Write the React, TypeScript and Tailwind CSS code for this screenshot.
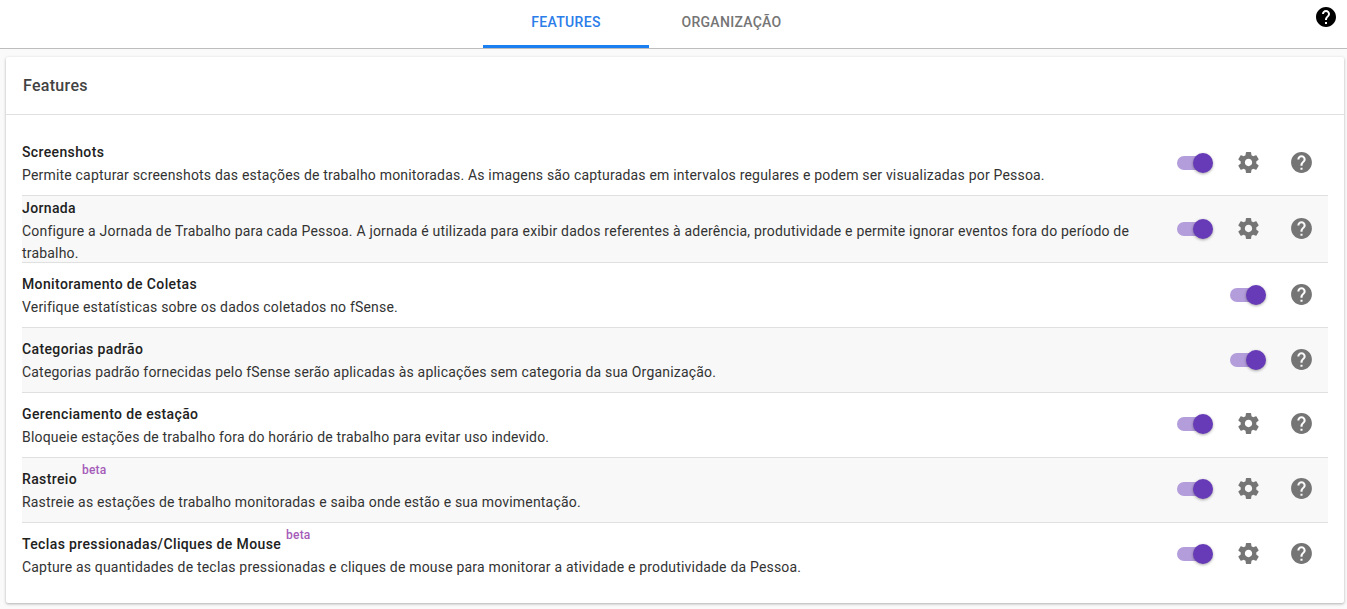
const gear = "M19.43 12.98c.04-.32.07-.64.07-.98s-.03-.66-.07-.98l2.11-1.65c.19-.15.24-.42.12-.64l-2-3.46c-.12-.22-.39-.3-.61-.22l-2.49 1c-.52-.4-1.08-.73-1.69-.98l-.38-2.65C14.46 2.18 14.25 2 14 2h-4c-.25 0-.46.18-.49.42l-.38 2.65c-.61.25-1.17.59-1.69.98l-2.49-1c-.23-.09-.49 0-.61.22l-2 3.46c-.13.22-.07.49.12.64l2.11 1.65c-.04.32-.07.65-.07.98s.03.66.07.98l-2.11 1.65c-.19.15-.24.42-.12.64l2 3.46c.12.22.39.3.61.22l2.49-1c.52.4 1.08.73 1.69.98l.38 2.65c.03.24.24.42.49.42h4c.25 0 .46-.18.49-.42l.38-2.65c.61-.25 1.17-.59 1.69-.98l2.49 1c.23.09.49 0 .61-.22l2-3.46c.12-.22.07-.49-.12-.64l-2.11-1.65zM12 15.5c-1.93 0-3.5-1.57-3.5-3.5s1.57-3.5 3.5-3.5 3.5 1.57 3.5 3.5-1.57 3.5-3.5 3.5z";
const help = "M12 2C6.48 2 2 6.48 2 12s4.48 10 10 10 10-4.48 10-10S17.52 2 12 2zm1 17h-2v-2h2v2zm2.07-7.75l-.9.92C13.45 12.9 13 13.5 13 15h-2v-.5c0-1.1.45-2.1 1.17-2.83l1.24-1.26c.37-.36.59-.86.59-1.41 0-1.1-.9-2-2-2s-2 .9-2 2H8c0-2.21 1.79-4 4-4s4 1.79 4 4c0 .88-.36 1.68-.93 2.25z";

function Icon({ d, className }: { d: string; className: string }) {
  return (
    <svg viewBox="0 0 24 24" className={className} fill="currentColor">
      <path d={d} />
    </svg>
  );
}

function Toggle({ className }: { className: string }) {
  return (
    <div className={`relative w-[36px] h-[20px] shrink-0 ${className}`}>
      <div className="absolute left-0 top-[3px] w-[34px] h-[14px] rounded-full bg-[#b39ddb]" />
      <div className="absolute right-0 top-0 w-[20px] h-[20px] rounded-full bg-[#673ab7] shadow-[0_1px_3px_rgba(0,0,0,0.35)]" />
    </div>
  );
}

type Row = { title: string; desc: string; gear: boolean; beta?: boolean; tall?: boolean };

const rows: Row[] = [
  { title: "Screenshots", desc: "Permite capturar screenshots das estações de trabalho monitoradas. As imagens são capturadas em intervalos regulares e podem ser visualizadas por Pessoa.", gear: true },
  { title: "Jornada", desc: "Configure a Jornada de Trabalho para cada Pessoa. A jornada é utilizada para exibir dados referentes à aderência, produtividade e permite ignorar eventos fora do período de trabalho.", gear: true, tall: true },
  { title: "Monitoramento de Coletas", desc: "Verifique estatísticas sobre os dados coletados no fSense.", gear: false },
  { title: "Categorias padrão", desc: "Categorias padrão fornecidas pelo fSense serão aplicadas às aplicações sem categoria da sua Organização.", gear: false },
  { title: "Gerenciamento de estação", desc: "Bloqueie estações de trabalho fora do horário de trabalho para evitar uso indevido.", gear: true },
  { title: "Rastreio", desc: "Rastreie as estações de trabalho monitoradas e saiba onde estão e sua movimentação.", gear: true, beta: true },
  { title: "Teclas pressionadas/Cliques de Mouse", desc: "Capture as quantidades de teclas pressionadas e cliques de mouse para monitorar a atividade e produtividade da Pessoa.", gear: true, beta: true },
];

export default function App() {
  return (
    <div className="min-h-screen bg-[#fafafa] font-['Roboto',sans-serif]">
      <header className="flex h-[49px] bg-white border-b border-[#bdbdbd]">
        <nav className="flex flex-1 justify-center">
          <div className="w-[166px] h-[48px] flex items-center justify-center border-b-[3px] border-[#1a7ff0] text-[#2b7de9] text-sm font-medium tracking-[0.35px] pb-[1px]">
            FEATURES
          </div>
          <div className="w-[166px] h-[48px] flex items-center justify-center text-[#757575] text-sm font-medium tracking-[0.28px] pb-[4px] pr-[1px]">
            ORGANIZAÇÃO
          </div>
        </nav>
        <div className="w-[49px] flex justify-start pt-[5px] pl-[16px]">
          <Icon d={help} className="w-[24px] h-[24px] text-black" />
        </div>
      </header>
      <section className="mx-[6px] mt-[8px] mr-[3px] bg-white rounded-[2px] shadow-[0_1px_3px_rgba(0,0,0,0.3)]">
        <h2 className="h-[58px] flex items-center px-[17px] border-b border-[#e0e0e0] text-base font-medium tracking-[0.3px] text-[#424242]">
          Features
        </h2>
        <div className="pt-[16px] pb-[15px] pl-[16px] pr-[16px]">
          {rows.map((r, i) => {
            const iconShift = i >= 4 ? "mb-[3px]" : "mb-[1px]";
            return (
              <div
                key={r.title}
                className={`flex items-center pr-[14px] border-b ${i < rows.length - 1 ? "border-[#e0e0e0]" : "border-transparent"} ${i % 2 === 1 ? "bg-[#f8f8f8]" : ""} ${r.tall ? "h-[67px]" : "h-[65px]"}`}
              >
                <div className={`flex-1 min-w-0 pr-[30px] ${r.tall ? "pt-[2px]" : ""}`}>
                  <div className="text-sm font-medium leading-[24px] tracking-[0.37px] text-[#212121]">
                    {r.title}
                    {r.beta && (
                      <span className="relative -top-[10px] ml-[5px] text-xs leading-none font-medium tracking-[0.2px] text-[#a55cb8]">beta</span>
                    )}
                  </div>
                  <div className="text-sm leading-[22px] tracking-[0.19px] text-[#333333]">{r.desc}</div>
                </div>
                <Toggle className={i >= 4 ? "mb-[2px]" : ""} />
                {r.gear && <Icon d={gear} className={`w-[25px] h-[25px] ml-[23px] text-[#757575] shrink-0 ${iconShift}`} />}
                <Icon d={help} className={`w-[25px] h-[25px] text-[#757575] shrink-0 ${iconShift} ${r.gear ? "ml-[28px]" : "ml-[23px]"}`} />
              </div>
            );
          })}
        </div>
      </section>
    </div>
  );
}
